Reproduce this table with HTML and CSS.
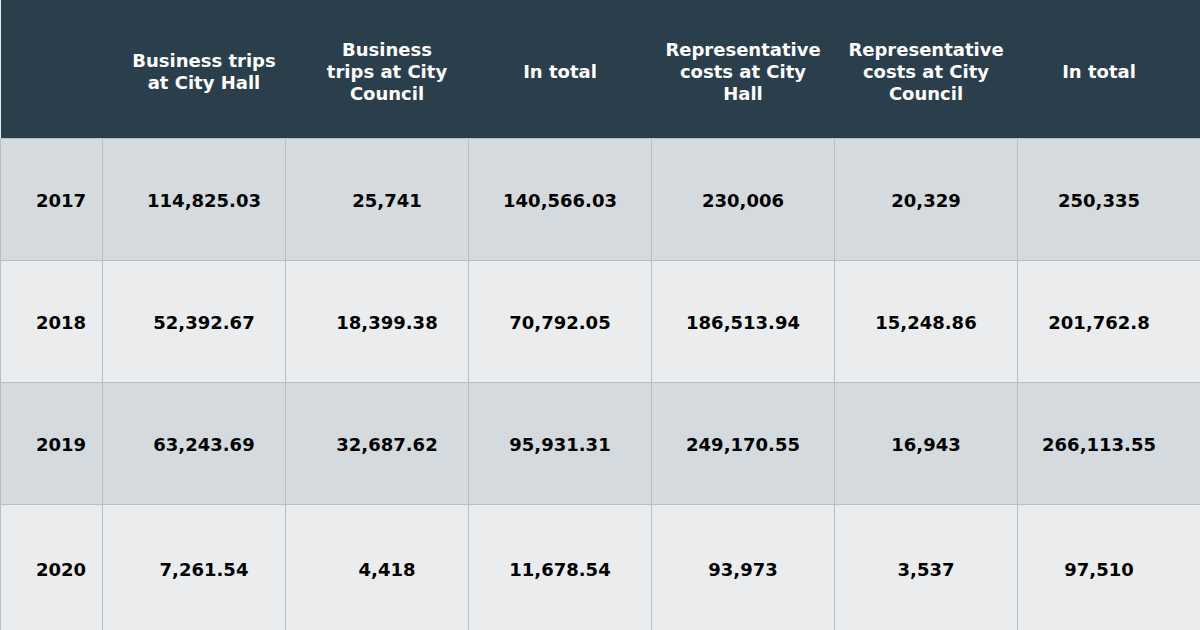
FILE: index.html
```html
<!DOCTYPE html>
<html>
<head>
<meta charset="utf-8">
<link rel="stylesheet" href="styles.css">
</head>
<body>
<table class="data">
  <colgroup>
    <col class="c-year">
    <col class="c-val"><col class="c-val"><col class="c-val"><col class="c-val"><col class="c-val"><col class="c-val">
  </colgroup>
  <thead>
    <tr>
      <th></th>
      <th>Business trips at City Hall</th>
      <th>Business trips at City Council</th>
      <th>In total</th>
      <th>Representative costs at City Hall</th>
      <th>Representative costs at City Council</th>
      <th>In total</th>
    </tr>
  </thead>
  <tbody>
    <tr class="dark">
      <td class="year">2017</td><td>114,825.03</td><td>25,741</td><td>140,566.03</td><td>230,006</td><td>20,329</td><td>250,335</td>
    </tr>
    <tr class="light">
      <td class="year">2018</td><td>52,392.67</td><td>18,399.38</td><td>70,792.05</td><td>186,513.94</td><td>15,248.86</td><td>201,762.8</td>
    </tr>
    <tr class="dark">
      <td class="year">2019</td><td>63,243.69</td><td>32,687.62</td><td>95,931.31</td><td>249,170.55</td><td>16,943</td><td>266,113.55</td>
    </tr>
    <tr class="light">
      <td class="year">2020</td><td>7,261.54</td><td>4,418</td><td>11,678.54</td><td>93,973</td><td>3,537</td><td>97,510</td>
    </tr>
  </tbody>
</table>
</body>
</html>
```
FILE: styles.css
```css
html, body {
  margin: 0;
  padding: 0;
  background: #ebecee;
}
body {
  width: 1200px;
  height: 630px;
  overflow: hidden;
  font-family: "DejaVu Sans", sans-serif;
}
.data {
  width: 1200px;
  border-collapse: collapse;
  table-layout: fixed;
  font-weight: bold;
  font-size: 18px;
}
.c-year { width: 102px; }
.c-val { width: 183px; }
.data th,
.data td {
  padding: 0 10px;
  text-align: center;
  vertical-align: middle;
  line-height: 22px;
}
.data th {
  background: #2a3e4c;
  color: #ffffff;
  height: 138px;
  padding-top: 6px;
  box-sizing: border-box;
  border: none;
}
.data td {
  height: 117px;
  padding-top: 4px;
  color: #000000;
  border: 1px solid #b9bec2;
}
.data th:nth-child(2),
.data td:nth-child(2) {
  padding-left: 20px;
  padding-right: 0;
}
.data th:nth-child(3),
.data td:nth-child(3) {
  padding-left: 36px;
  padding-right: 16px;
}
.data th:nth-child(7),
.data td:nth-child(7) {
  padding-left: 0;
  padding-right: 20px;
}
.data td.year {
  text-align: right;
  padding-left: 0;
  padding-right: 16px;
}
.dark td { background: #d4dadd; }
.light td { background: #ebecee; }
.data tbody tr:last-child td { height: 122px; }
```
